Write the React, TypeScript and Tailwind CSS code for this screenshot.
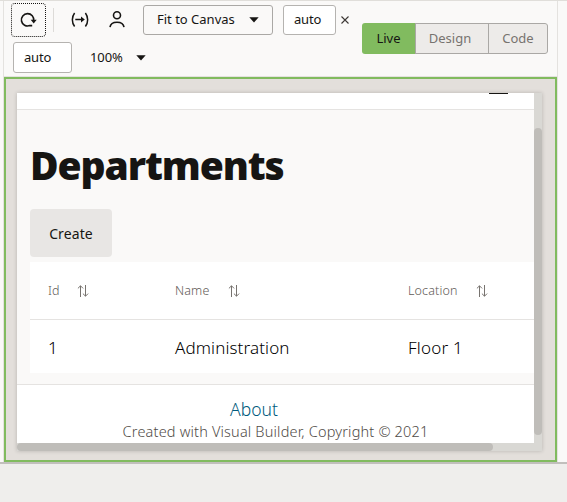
import React from "react";

const Caret = () => (
  <svg width="10" height="6" viewBox="0 0 10 6" className="shrink-0">
    <path d="M0.3 0.3h9.4L5 5.6z" fill="#161513" />
  </svg>
);

const RefreshIcon = () => (
  <svg width="18" height="16" viewBox="0 0 18 16" fill="none" stroke="#161513" strokeWidth="1.6">
    <path d="M12.200 13.600h-2.400A6.200 6.200 0 1 1 13.700 8.800" />
    <path d="M10.700 7.800h6l-3 3.700z" fill="#161513" stroke="none" />
  </svg>
);

const ResizeIcon = () => (
  <svg width="18" height="16" viewBox="0 0 18 16" fill="none" stroke="#161513" strokeWidth="1.5">
    <path d="M3.600 1C.6 5 .6 10.500 3.600 14.500M14.400 1c3 4 3 9.500 0 13.500M4.300 7.500h7" />
    <path d="M10 4.500l3.800 3-3.800 3z" fill="#161513" stroke="none" />
  </svg>
);

const PersonIcon = () => (
  <svg width="16" height="17" viewBox="0 0 16 17" fill="none" stroke="#161513" strokeWidth="1.6">
    <circle cx="8" cy="4.300" r="3.500" />
    <path d="M1 16.200c.4-3.100 3.200-5 7-5s6.600 1.900 7 5" />
  </svg>
);

const SortIcon = () => (
  <svg width="12" height="12" viewBox="0 0 12 12" fill="none" stroke="#77736f" strokeWidth="1">
    <path d="M3.500 12V.8M.9 3.400L3.500.8l2.600 2.600M8.500 0v11.200M5.900 8.600l2.600 2.600 2.600-2.600" />
  </svg>
);

const columns = [
  { label: "Id", value: "1", width: "w-[127px]", track: "", valueTrack: "" },
  { label: "Name", value: "Administration", width: "w-[233px]", track: "tracking-[0.15px]", valueTrack: "tracking-[0.12px]" },
  { label: "Location", value: "Floor 1", width: "w-[126px]", track: "tracking-[0.15px]", valueTrack: "tracking-[0.2px]" },
];

function Toolbar() {
  return (
    <div className="flex h-[76px] border-b border-[#e4e2df] text-[13px]">
      <div className="flex w-[358px] shrink-0 flex-col">
        <div className="flex h-[38px] items-start pl-[7px] pt-[2px]">
          <button className="flex h-[34px] w-[35px] items-center justify-center rounded-[4px] border border-dotted border-[#161513]">
            <RefreshIcon />
          </button>
          <div className="ml-[7px] mt-[5px] h-6 w-px bg-[#dddbd8]" />
          <div className="ml-[17px] mt-[9px]"><ResizeIcon /></div>
          <div className="ml-5 mt-[8px]"><PersonIcon /></div>
          <button className="ml-[18px] mt-[2px] flex h-[30px] w-[130px] items-center justify-between rounded-[3px] border border-[#aaa8a5] pl-[13px] pr-[13px]">
            <span className="whitespace-nowrap">Fit to Canvas</span>
            <Caret />
          </button>
          <div className="ml-[10px] mt-[2px] flex h-[30px] w-[53px] items-center rounded-[3px] border border-[#b5b3b0] bg-white pl-[10px] tracking-[-0.2px]">auto</div>
          <svg width="8" height="8" viewBox="0 0 8 8" className="ml-[5px] mt-[13px]" stroke="#3c3835" strokeWidth="1.1">
            <path d="M.5.5l7 7M7.500.5L.5 7.500" />
          </svg>
        </div>
        <div className="flex items-center pl-[9px] pt-[3px]">
          <div className="flex h-[31px] w-[59px] items-center rounded-[3px] border border-[#b5b3b0] bg-white pl-[10px] tracking-[-0.2px]">auto</div>
          <span className="ml-[18px] mr-[13px] w-[33px] tracking-[-0.1px]">100%</span>
          <Caret />
        </div>
      </div>
      <div className="mt-[22px] flex h-[31px] w-[186px] overflow-hidden rounded-[3px]">
        <div className="flex w-[53px] items-center justify-center bg-[#81bb5f]">Live</div>
        <div className="flex w-[74px] items-center justify-center border border-[#aaa8a5] bg-[#edebe9] pr-[4px] text-[#77736f]">Design</div>
        <div className="flex w-[59px] items-center justify-center rounded-r-[3px] border border-l-0 border-[#aaa8a5] bg-[#edebe9] text-[#77736f]">Code</div>
      </div>
    </div>
  );
}

function Page() {
  return (
    <div className="flex h-[350px] w-[517px] flex-col overflow-hidden bg-[#faf9f8]">
      <div className="flex h-[17px] shrink-0 justify-end border-b border-[#e5e3e1] bg-white pr-[26px]">
        <div className="h-px w-[19px] bg-[#161513]" />
      </div>
      <div className="flex h-[274px] shrink-0 flex-col pl-[13px] pt-[33px]">
        <h1 className="text-[39px] font-black leading-[44px] tracking-[-1.1px]">Departments</h1>
        <button className="mt-[22px] h-12 w-[82px] shrink-0 rounded-[4px] bg-[#e8e6e4] text-[14px] tracking-[0.1px]">Create</button>
        <div className="mt-[5px] bg-white">
          <div className="flex h-[58px] items-center border-b border-[#e5e3e1] pl-[18px] text-[12.500px] font-light text-[#5f5b57]">
            {columns.map((c) => (
              <div key={c.label} className={`flex items-center gap-[18px] ${c.width} ${c.track}`}>
                <span className="relative top-px">{c.label}</span>
                <SortIcon />
              </div>
            ))}
          </div>
          <div className="flex h-[53px] items-center pl-[18px] pt-[3px] text-[17px] font-light text-black">
            {columns.map((c) => (
              <div key={c.label} className={`${c.width} ${c.valueTrack}`}>{c.value}</div>
            ))}
          </div>
        </div>
      </div>
      <footer className="flex h-[59px] flex-col items-center border-t border-[#e5e3e1] bg-white pt-[12px]">
        <a className="pr-[43px] text-[17.500px] font-light leading-6 text-[#005a7c]">About</a>
        <p className="whitespace-nowrap text-[14.500px] font-light leading-5 tracking-[0.18px] text-[#4f4b47]">Created with Visual Builder, Copyright © 2021</p>
      </footer>
    </div>
  );
}

export default function App() {
  return (
    <div className="h-[502px] w-[567px] overflow-hidden bg-[#efeeec] font-['Noto_Sans','Open_Sans',sans-serif] text-[#161513]">
      <div className="flex h-[462px] border-t border-[#e0deda] bg-[#faf9f8]">
        <div className="w-1 shrink-0 border-r border-[#e4e2df]" />
        <div className="w-[553px] shrink-0">
          <Toolbar />
          <div className="h-[385px] border-2 border-[#81bb5f] bg-[#e3dfdb] pl-[11px] pt-[14px]">
            <div className="h-[358px] w-[525px] bg-[#d9d8d4] shadow-[0_0_4px_rgba(0,0,0,0.2)]">
              <div className="flex">
                <Page />
                <div className="w-2 pt-[35px]">
                  <div className="h-[307px] rounded-full bg-[#bfbdb9]" />
                </div>
              </div>
              <div className="h-2 w-[476px] rounded-full bg-[#bfbdb9]" />
            </div>
          </div>
        </div>
        <div className="h-[461px] flex-1 border-l border-[#e4e2df]" />
      </div>
      <div className="h-[2px] bg-[#c1bfbc]" />
    </div>
  );
}
